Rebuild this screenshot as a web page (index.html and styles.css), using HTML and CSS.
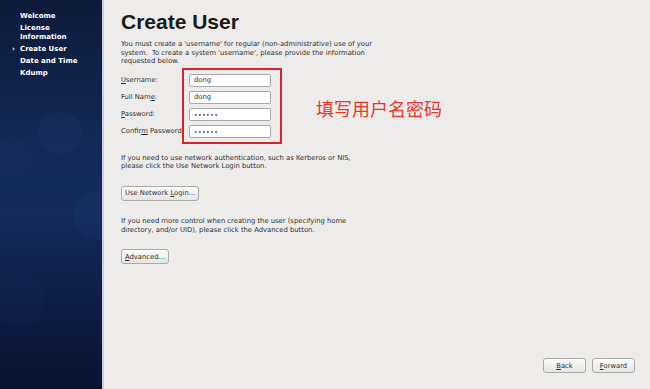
FILE: index.html
```html
<!DOCTYPE html>
<html lang="en">
<head>
    <meta charset="UTF-8">
    <title>Create User</title>
    <link rel="stylesheet" href="styles.css">
</head>
<body>
    <div class="sidebar">
        <ul class="steps">
            <li>Welcome</li>
            <li>License<br>Information</li>
            <li class="current">Create User</li>
            <li>Date and Time</li>
            <li>Kdump</li>
        </ul>
    </div>

    <div class="main">
        <h1>Create User</h1>
        <p class="intro">You must create a 'username' for regular (non-administrative) use of your system.&nbsp; To create a system 'username', please provide the information requested below.</p>

        <div class="form">
            <label><u>U</u>sername:</label>
            <div class="field">dong</div>
            <label>Full Nam<u>e</u>:</label>
            <div class="field">dong</div>
            <label><u>P</u>assword:</label>
            <div class="field dots">&bull;&bull;&bull;&bull;&bull;&bull;</div>
            <label>Confir<u>m</u> Password:</label>
            <div class="field dots">&bull;&bull;&bull;&bull;&bull;&bull;</div>

            <div class="mark"></div>
            <div class="note">填写用户名密码</div>
        </div>

        <p class="info">If you need to use network authentication, such as Kerberos or NIS, please click the Use Network Login button.</p>
        <button class="btn">Use Network <u>L</u>ogin...</button>

        <p class="info">If you need more control when creating the user (specifying home directory, and/or UID), please click the Advanced button.</p>
        <button class="btn"><u>A</u>dvanced...</button>

        <div class="footer">
            <button class="btn nav"><u>B</u>ack</button>
            <button class="btn nav"><u>F</u>orward</button>
        </div>
    </div>
</body>
</html>
```

FILE: styles.css
```css
html, body {
    height: 100%;
}
body {
    margin: 0;
    display: flex;
    font-family: 'DejaVu Sans', sans-serif;
    background-color: #edeceb;
    color: #2e2e2e;
    overflow: hidden;
}
u {
    text-decoration: underline;
    text-underline-offset: 1px;
}

/* left step list */
.sidebar {
    width: 102px;
    flex-shrink: 0;
    border-right: 2px solid #c8d0e2;
    background:
        radial-gradient(circle at 60px 133px, rgba(70, 100, 180, 0.06) 0 21px, transparent 22px),
        radial-gradient(circle at 12px 158px, rgba(70, 100, 180, 0.03) 0 20px, transparent 21px),
        radial-gradient(circle at 98px 215px, rgba(70, 100, 180, 0.05) 0 24px, transparent 25px),
        radial-gradient(circle at 18px 300px, rgba(70, 100, 180, 0.03) 0 26px, transparent 27px),
        linear-gradient(to bottom, #0d1a3a 0%, #132856 35%, #142a5c 55%, #0e1c44 80%, #0a1330 100%);
}
.steps {
    list-style: none;
    margin: 0;
    padding: 12px 0 0 20px;
}
.steps li {
    position: relative;
    color: #ffffff;
    font-weight: bold;
    font-size: 7px;
    line-height: 9px;
    margin-bottom: 3px;
}
.steps li.current::before {
    content: "\203A";
    position: absolute;
    left: -8px;
    top: 0;
}

/* content */
.main {
    flex: 1;
    display: flex;
    flex-direction: column;
    padding: 0 15px 16px 17px;
}
h1 {
    font-family: 'Liberation Sans', Arial, sans-serif;
    font-size: 21px;
    font-weight: bold;
    color: #1a1a1a;
    margin: 10px 0 6px;
    line-height: 24px;
}
p {
    font-size: 6.8px;
    line-height: 8.6px;
    margin: 0;
}
.intro {
    width: 270px;
}
.form {
    position: relative;
    display: grid;
    grid-template-columns: 68px 82px;
    row-gap: 4px;
    align-items: center;
    margin: 8px 0 16px;
    font-size: 6.8px;
}
.field {
    height: 11px;
    line-height: 11px;
    padding: 0 4px;
    background: #ffffff;
    border: 1px solid #a8a8a8;
    border-radius: 2px;
}
.field.dots {
    letter-spacing: 0.5px;
    font-size: 6px;
}
.mark {
    position: absolute;
    left: 61px;
    top: -6px;
    width: 96px;
    height: 72px;
    border: 2px solid #d52331;
}
.note {
    position: absolute;
    left: 195px;
    top: 24px;
    font-family: 'Noto Sans CJK SC', sans-serif;
    font-size: 18px;
    line-height: 20px;
    color: #e8362f;
    white-space: nowrap;
}
.info {
    width: 240px;
}
.btn {
    align-self: flex-start;
    font-family: 'DejaVu Sans', sans-serif;
    font-size: 6.8px;
    color: #2e2e2e;
    height: 15px;
    padding: 0 3px;
    margin: 15px 0 16px;
    background: linear-gradient(to bottom, #fbfbfa, #e6e5e3);
    border: 1px solid #a9a9a7;
    border-radius: 3px;
}
.footer {
    margin-top: auto;
    display: flex;
    justify-content: flex-end;
    gap: 6px;
}
.btn.nav {
    margin: 0;
    width: 43px;
    height: 15px;
}
```
